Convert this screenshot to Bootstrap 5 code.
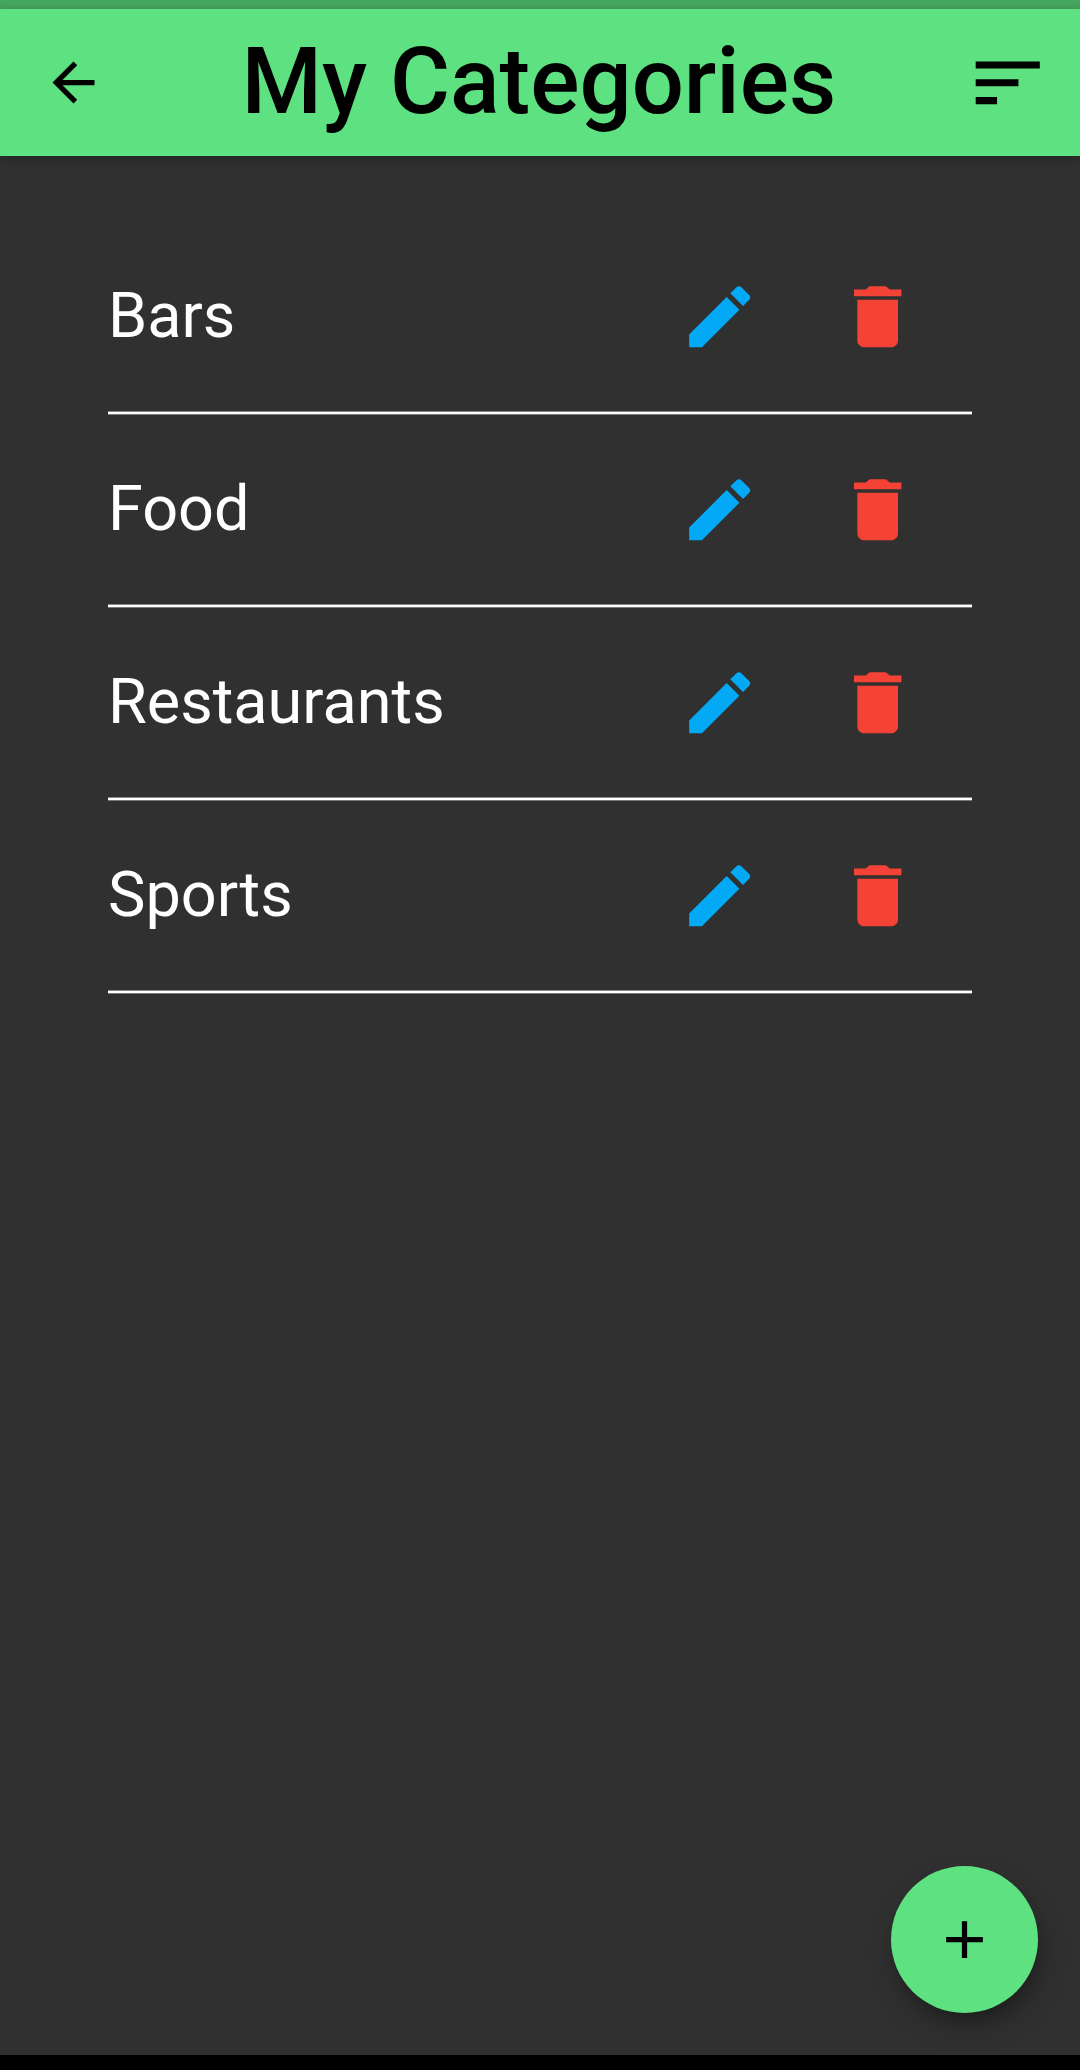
<!DOCTYPE html>
<html lang="en">
<head>
<meta charset="utf-8">
<meta name="viewport" content="width=device-width, initial-scale=1">
<title>My Categories</title>
<link href="https://cdn.jsdelivr.net/npm/bootstrap@5.3.0/dist/css/bootstrap.min.css" rel="stylesheet">
<style>
  body { background: #303030; font-family: Roboto, sans-serif; color: #fff; }
  .screen { height: 2070px; }
  .status-strip { height: 9px; background: #45a860; }
  .app-bar { height: 147px; padding: 0 29px 0 42px; background: #5ee180; color: #000; box-shadow: 0 2px 9px rgba(0,0,0,.3); }
  .app-title { font-size: 92px; font-weight: 500; line-height: 108px; white-space: nowrap; padding-bottom: 1px; }
  .plain-btn { border: 0; padding: 0; background: none; color: inherit; display: block; line-height: 0; }
  .bar-start { width: 71px; }
  .bar-end { width: 86px; }
  .category-list { margin: 66px 108px 0; }
  .category-row { height: 189px; padding-right: 54px; font-size: 63px; line-height: 74px; }
  .category-name { padding-bottom: 1px; }
  .row-actions { gap: 76px; }
  .edit-btn { color: #03a9f4; }
  .delete-btn { color: #f44336; }
  .divider { height: 4px; background: linear-gradient(#8a8a8a 1px, #fff 1px 3px, #777 3px); }
  .fab-wrap { padding: 0 42px 42px; }
  .fab { width: 147px; height: 147px; background: #5ee180; color: #000; box-shadow: 3px 10px 14px -4px rgba(0,0,0,.2), 4px 14px 28px rgba(0,0,0,.22); }
  .nav-strip { height: 15px; background: #000; }
</style>
</head>
<body>
<div class="screen d-flex flex-column overflow-hidden">
  <div class="status-strip flex-shrink-0"></div>
  <header class="app-bar d-flex align-items-center justify-content-between flex-shrink-0">
    <div class="bar-start">
      <button class="plain-btn" type="button" aria-label="Back">
        <svg width="63" height="63" viewBox="0 0 24 24" fill="currentColor"><path d="M20 11H7.83l5.59-5.59L12 4l-8 8 8 8 1.41-1.41L7.83 13H20v-2z"/></svg>
      </button>
    </div>
    <h1 class="app-title m-0">My Categories</h1>
    <div class="bar-end">
      <button class="plain-btn" type="button" aria-label="Sort">
        <svg width="85.5" height="85.5" viewBox="0 0 24 24" fill="currentColor"><path d="M3 18h6v-2H3v2zM3 6v2h18V6H3zm0 7h12v-2H3v2z"/></svg>
      </button>
    </div>
  </header>

  <svg class="d-none">
    <symbol id="edit" viewBox="0 0 24 24"><path d="M3 17.25V21h3.75L17.81 9.94l-3.75-3.75L3 17.25zM20.71 7.04c.39-.39.39-1.02 0-1.41l-2.34-2.34c-.39-.39-1.02-.39-1.41 0l-1.83 1.83 3.75 3.75 1.83-1.83z"/></symbol>
    <symbol id="trash" viewBox="0 0 24 24"><path d="M6 19c0 1.1.9 2 2 2h8c1.1 0 2-.9 2-2V7H6v12zM19 4h-3.5l-.71-.71c-.18-.18-.44-.29-.7-.29H9.91c-.26 0-.52.11-.7.29L8.5 4H5v2h14V4z"/></symbol>
  </svg>

  <main class="flex-grow-1">
    <ul class="category-list list-unstyled">
      <li>
        <div class="category-row d-flex align-items-center justify-content-between">
          <span class="category-name">Bars</span>
          <div class="row-actions d-flex">
            <button class="plain-btn edit-btn" type="button" aria-label="Edit"><svg width="81.4" height="81.4" fill="currentColor"><use href="#edit"/></svg></button>
            <button class="plain-btn delete-btn" type="button" aria-label="Delete"><svg width="81.4" height="81.4" fill="currentColor"><use href="#trash"/></svg></button>
          </div>
        </div>
        <div class="divider"></div>
      </li>
      <li>
        <div class="category-row d-flex align-items-center justify-content-between">
          <span class="category-name">Food</span>
          <div class="row-actions d-flex">
            <button class="plain-btn edit-btn" type="button" aria-label="Edit"><svg width="81.4" height="81.4" fill="currentColor"><use href="#edit"/></svg></button>
            <button class="plain-btn delete-btn" type="button" aria-label="Delete"><svg width="81.4" height="81.4" fill="currentColor"><use href="#trash"/></svg></button>
          </div>
        </div>
        <div class="divider"></div>
      </li>
      <li>
        <div class="category-row d-flex align-items-center justify-content-between">
          <span class="category-name">Restaurants</span>
          <div class="row-actions d-flex">
            <button class="plain-btn edit-btn" type="button" aria-label="Edit"><svg width="81.4" height="81.4" fill="currentColor"><use href="#edit"/></svg></button>
            <button class="plain-btn delete-btn" type="button" aria-label="Delete"><svg width="81.4" height="81.4" fill="currentColor"><use href="#trash"/></svg></button>
          </div>
        </div>
        <div class="divider"></div>
      </li>
      <li>
        <div class="category-row d-flex align-items-center justify-content-between">
          <span class="category-name">Sports</span>
          <div class="row-actions d-flex">
            <button class="plain-btn edit-btn" type="button" aria-label="Edit"><svg width="81.4" height="81.4" fill="currentColor"><use href="#edit"/></svg></button>
            <button class="plain-btn delete-btn" type="button" aria-label="Delete"><svg width="81.4" height="81.4" fill="currentColor"><use href="#trash"/></svg></button>
          </div>
        </div>
        <div class="divider"></div>
      </li>
    </ul>
  </main>

  <div class="fab-wrap d-flex justify-content-end">
    <button class="fab border-0 p-0 rounded-circle d-flex align-items-center justify-content-center" type="button" aria-label="Add category">
      <svg width="63" height="63" viewBox="0 0 24 24" fill="currentColor"><path d="M19 13h-6v6h-2v-6H5v-2h6V5h2v6h6v2z"/></svg>
    </button>
  </div>
  <div class="nav-strip position-relative flex-shrink-0"></div>
</div>
<script src="https://cdn.jsdelivr.net/npm/bootstrap@5.3.0/dist/js/bootstrap.bundle.min.js"></script>
</body>
</html>
